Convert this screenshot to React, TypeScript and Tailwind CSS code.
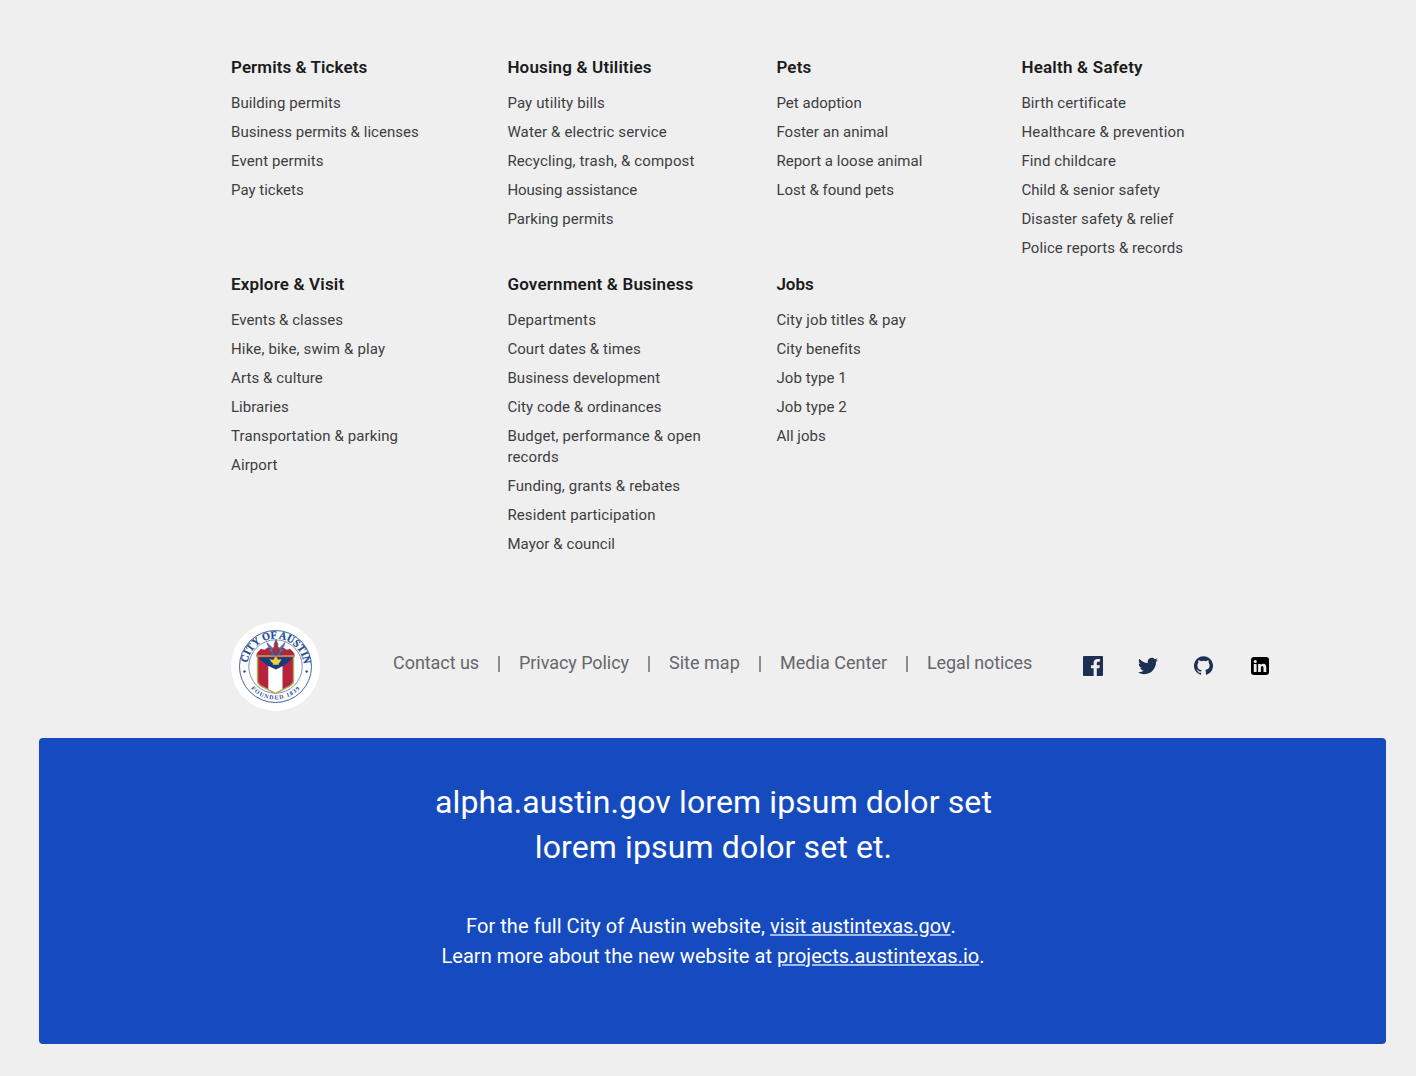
import React from "react";

type Item = [string, string?];
type Section = { title: Item; width: string; items: Item[] };

const rows: Section[][] = [
  [
    { title: ["Permits & Tickets", "tracking-[0.08px]"], width: "w-[276.4px]", items: [["Building permits"], ["Business permits & licenses", "tracking-[0.03px]"], ["Event permits"], ["Pay tickets", "tracking-[0px]"]] },
    { title: ["Housing & Utilities"], width: "w-[269px]", items: [["Pay utility bills", "tracking-[0.14px]"], ["Water & electric service", "tracking-[0.14px]"], ["Recycling, trash, & compost", "tracking-[0.14px]"], ["Housing assistance", "tracking-[-0.1px]"], ["Parking permits", "tracking-[0.07px]"]] },
    { title: ["Pets"], width: "w-[245px]", items: [["Pet adoption", "tracking-[0.03px]"], ["Foster an animal", "tracking-[0.03px]"], ["Report a loose animal", "tracking-[0.03px]"], ["Lost & found pets", "tracking-[0px]"]] },
    { title: ["Health & Safety", "tracking-[0.22px]"], width: "w-[200px]", items: [["Birth certificate"], ["Healthcare & prevention", "tracking-[0.17px]"], ["Find childcare"], ["Child & senior safety"], ["Disaster safety & relief"], ["Police reports & records", "tracking-[0.07px]"]] },
  ],
  [
    { title: ["Explore & Visit"], width: "w-[276.4px]", items: [["Events & classes", "tracking-[0px]"], ["Hike, bike, swim & play", "tracking-[0.17px]"], ["Arts & culture"], ["Libraries", "tracking-[0.03px]"], ["Transportation & parking"], ["Airport"]] },
    { title: ["Government & Business"], width: "w-[269px]", items: [["Departments", "tracking-[0.17px]"], ["Court dates & times", "tracking-[0.07px]"], ["Business development"], ["City code & ordinances", "tracking-[0.07px]"], ["Budget, performance & open records", "tracking-[0.14px]"], ["Funding, grants & rebates", "tracking-[0.14px]"], ["Resident participation"], ["Mayor & council", "tracking-[0.07px]"]] },
    { title: ["Jobs", "tracking-[0px]"], width: "w-[245px]", items: [["City job titles & pay", "tracking-[0.14px]"], ["City benefits"], ["Job type 1"], ["Job type 2"], ["All jobs", "tracking-[0.03px]"]] },
  ],
];

function LinkSection({ section }: { section: Section }) {
  return (
    <section className={`${section.width} shrink-0`}>
      <h2 className={`text-[17px] leading-6 font-semibold text-[#1b1b1b] ${section.title[1] ?? "tracking-[0.17px]"}`}>{section.title[0]}</h2>
      <ul className="mt-[14px] flex w-[204px] flex-col gap-2">
        {section.items.map(([label, tracking]) => (
          <li key={label} className={`text-[15px] leading-[21px] text-[#3d3d3f] ${tracking ?? "tracking-[0.1px]"}`}>
            <a href="#">{label}</a>
          </li>
        ))}
      </ul>
    </section>
  );
}

function Seal() {
  return (
    <svg viewBox="0 0 90 90" className="size-[90px] shrink-0" role="img" aria-label="City of Austin seal">
      <defs>
        <path id="seal-top" d="M16.4 41.5A28.3 28.3 0 0 1 72.6 41.5" />
        <path id="seal-bottom" d="M19.2 65.7A33 33 0 0 0 69.8 65.7" />
      </defs>
      <circle cx="44.5" cy="44.5" r="44.5" fill="#fff" />
      <circle cx="44.5" cy="44.5" r="36" fill="none" stroke="#3f659f" strokeWidth="1" />
      <circle cx="44.5" cy="44.5" r="26.7" fill="none" stroke="#5676a8" strokeWidth="0.8" />
      <text fontFamily="Liberation Serif, serif" fontWeight="700" fontSize="10.8" fill="#1b4c93" stroke="#1b4c93" strokeWidth="0.25">
        <textPath href="#seal-top" startOffset="0.5" textLength="82" lengthAdjust="spacingAndGlyphs">CITY OF AUSTIN</textPath>
      </text>
      <text fontFamily="Liberation Serif, serif" fontWeight="700" fontSize="6" fill="#1b4c93">
        <textPath href="#seal-bottom" startOffset="1" textLength="55">FOUNDED 1839</textPath>
      </text>
      <circle cx="13.5" cy="49.5" r="1.2" fill="#205196" />
      <circle cx="75.7" cy="49.5" r="1.2" fill="#205196" />
      <path d="M25.5 33.5L26.5 30.5L30 27L33.5 28L37 25.5L44.5 27L52 25.5L55.5 28L59 27L62.5 30.5L63.5 33.5L62.5 36V58.5Q62.5 62.5 57 65L44.5 71.5L32 65Q26.5 62.5 26.5 58.5V36Z" fill="#b7233e" stroke="#8d4350" strokeWidth="0.5" />
      <path d="M37.3 42H51.5V67.5L44.5 71L37.3 67.5Z" fill="#fff" />
      <path d="M27 35.5H62.5L54 43L44.8 47.5L35.5 43Z" fill="#153c80" />
      <path d="M25.5 34H63.5" stroke="#b2ab50" strokeWidth="1.5" />
      <path d="M26.5 35V58.5Q26.5 62.5 32 65L44.5 71.5L57 65Q62.5 62.5 62.5 58.5V35" fill="none" stroke="#b2ab50" strokeWidth="1.4" />
      <path d="M38.3 36.6Q41 38.6 42.8 37.4L43.5 35.7L44.8 34.8L46.1 35.7L46.8 37.4Q48.5 38 50.7 36.9L48.7 40.4Q46.6 41.6 48 42.7H41.5Q43 41.5 40.5 40.2Z" fill="#f0cf39" />
      <path d="M36 20.5Q36.5 25 40 26.5L38 28L42 31.5L39.5 33H50.5L48 31.5L52.5 28L50 26.5Q53.5 25 54 20.5L49.5 25L48 31L45 33L42 31L40.5 25Z" fill="#5277ac" stroke="#335f9e" strokeWidth="0.6" />
      <path d="M45 17.5L46.8 22V26L45.8 33H44.2L43.2 26V22Z" fill="#b52d42" stroke="#244c86" strokeWidth="0.6" />
      <path d="M41.5 26H48.5" stroke="#b52d42" strokeWidth="1.5" />
    </svg>
  );
}

const footerLinks: [string, string, string][] = [
  ["Contact us", "w-[126px]", "tracking-[-0.05px]"],
  ["Privacy Policy", "w-[150px]", "tracking-[-0.06px]"],
  ["Site map", "w-[111px]", "tracking-[0.02px]"],
  ["Media Center", "w-[147px]", "tracking-[0.03px]"],
  ["Legal notices", "w-[106px]", "tracking-[-0.12px]"],
];

export default function App() {
  return (
    <div className="flex h-[1076px] w-full flex-col bg-[#efefef] pt-[55px] font-[Roboto,sans-serif]">
      <nav className="ml-[231px] flex flex-col gap-[13px]">
        {rows.map((row, i) => (
          <div key={i} className="flex">
            {row.map((s) => <LinkSection key={s.title[0]} section={s} />)}
          </div>
        ))}
      </nav>

      <div className="mt-[67px] ml-[231px] flex h-[90px]">
        <Seal />
        <ul className="mt-[29px] ml-[72px] flex h-6 text-[18px] leading-6 text-[#65676b]">
          {footerLinks.map(([label, width, tracking], i) => (
            <li key={label} className={`${width} ${tracking} flex shrink-0 items-center justify-between whitespace-nowrap`}>
              <a href="#">{label}</a>
              {i < 4 && <span className="mt-0.5 mr-[19.5px] h-4 w-[1.5px] bg-[#8b8d92]" />}
            </li>
          ))}
        </ul>
        <div className="mt-8 ml-[50px] flex h-6 items-center text-[#1d2f52]">
          <svg viewBox="0 0 20 20" className="size-5" fill="currentColor" aria-label="Facebook"><path d="M1.1 0H18.9C19.5 0 20 .5 20 1.1V18.9C20 19.5 19.5 20 18.9 20H13.8V12.3H16.4L16.8 9.2H13.8V7.3C13.8 6.4 14 5.8 15.3 5.8H16.9V3.1C16.6 3 15.7 3 14.6 3C12.2 3 10.6 4.4 10.6 7V9.2H8V12.3H10.6V20H1.1C.5 20 0 19.5 0 18.9V1.1C0 .5.5 0 1.1 0Z" /></svg>
          <svg viewBox="0 0 24 24" className="ml-[35px] size-5" fill="currentColor" aria-label="Twitter"><path d="M23.953 4.57a10 10 0 01-2.825.775 4.958 4.958 0 002.163-2.723c-.951.555-2.005.959-3.127 1.184a4.92 4.92 0 00-8.384 4.482C7.69 8.095 4.067 6.13 1.64 3.162a4.822 4.822 0 00-.666 2.475c0 1.71.87 3.213 2.188 4.096a4.904 4.904 0 01-2.228-.616v.06a4.923 4.923 0 003.946 4.827 4.996 4.996 0 01-2.212.085 4.936 4.936 0 004.604 3.417 9.867 9.867 0 01-6.102 2.105c-.39 0-.779-.023-1.17-.067a13.995 13.995 0 007.557 2.209c9.053 0 13.998-7.496 13.998-13.985 0-.21 0-.42-.015-.63A9.935 9.935 0 0024 4.59z" /></svg>
          <svg viewBox="0 0 24 24" className="-mt-px ml-9 size-[19px]" fill="currentColor" aria-label="GitHub"><path d="M12 .3a12 12 0 00-3.8 23.4c.6.1.8-.3.8-.6v-2c-3.3.7-4-1.6-4-1.6-.6-1.4-1.4-1.8-1.4-1.8-1-.7.1-.7.1-.7 1.2 0 1.9 1.2 1.9 1.2 1 1.8 2.8 1.3 3.5 1 0-.8.4-1.3.7-1.6-2.7-.3-5.5-1.3-5.5-6 0-1.2.5-2.3 1.3-3.1-.2-.4-.6-1.6 0-3.2 0 0 1-.3 3.4 1.2a11.5 11.5 0 016 0c2.3-1.5 3.3-1.2 3.3-1.2.6 1.6.2 2.8 0 3.2.9.8 1.3 1.9 1.3 3.2 0 4.6-2.8 5.6-5.5 5.9.5.4.9 1 .9 2.2v3.3c0 .3.1.7.8.6A12 12 0 0012 .3" /></svg>
          <svg viewBox="0 0 18 18" className="ml-[38px] size-[18px]" aria-label="LinkedIn"><rect width="18" height="18" rx="3" fill="#000" /><g fill="#efefef"><circle cx="4.2" cy="4.5" r="1.55" /><path d="M2.8 6.9H5.6V15H2.8ZM7.1 6.9H9.8V8.1Q10.7 6.7 12.4 6.7Q15.3 6.7 15.3 10.3V15H12.5V10.8Q12.5 9 11.3 9Q9.9 9 9.9 10.9V15H7.1Z" /></g></svg>
        </div>
      </div>

      <div className="mt-[25.5px] ml-[39px] flex h-[306px] w-[1347px] flex-col items-center rounded bg-[#164bc0] pt-[42.5px] text-center text-white">
        <h1 className="ml-[2px] text-[32px] leading-[45px] tracking-[0.12px]">
          alpha.austin.gov lorem ipsum dolor set
          <br />
          lorem ipsum dolor set et.
        </h1>
        <div className="mt-[41px] text-[20px] leading-[30px] tracking-[0.06px]">
          <p className="mr-[3px]">For the full City of Austin website, <a href="#" className="tracking-[-0.05px] underline decoration-white/60 decoration-2 underline-offset-1">visit austintexas.gov</a>.</p>
          <p className="ml-px">Learn more about the new website at <a href="#" className="tracking-[0.02px] underline decoration-white/60 decoration-2 underline-offset-1">projects.austintexas.io</a>.</p>
        </div>
      </div>
    </div>
  );
}
